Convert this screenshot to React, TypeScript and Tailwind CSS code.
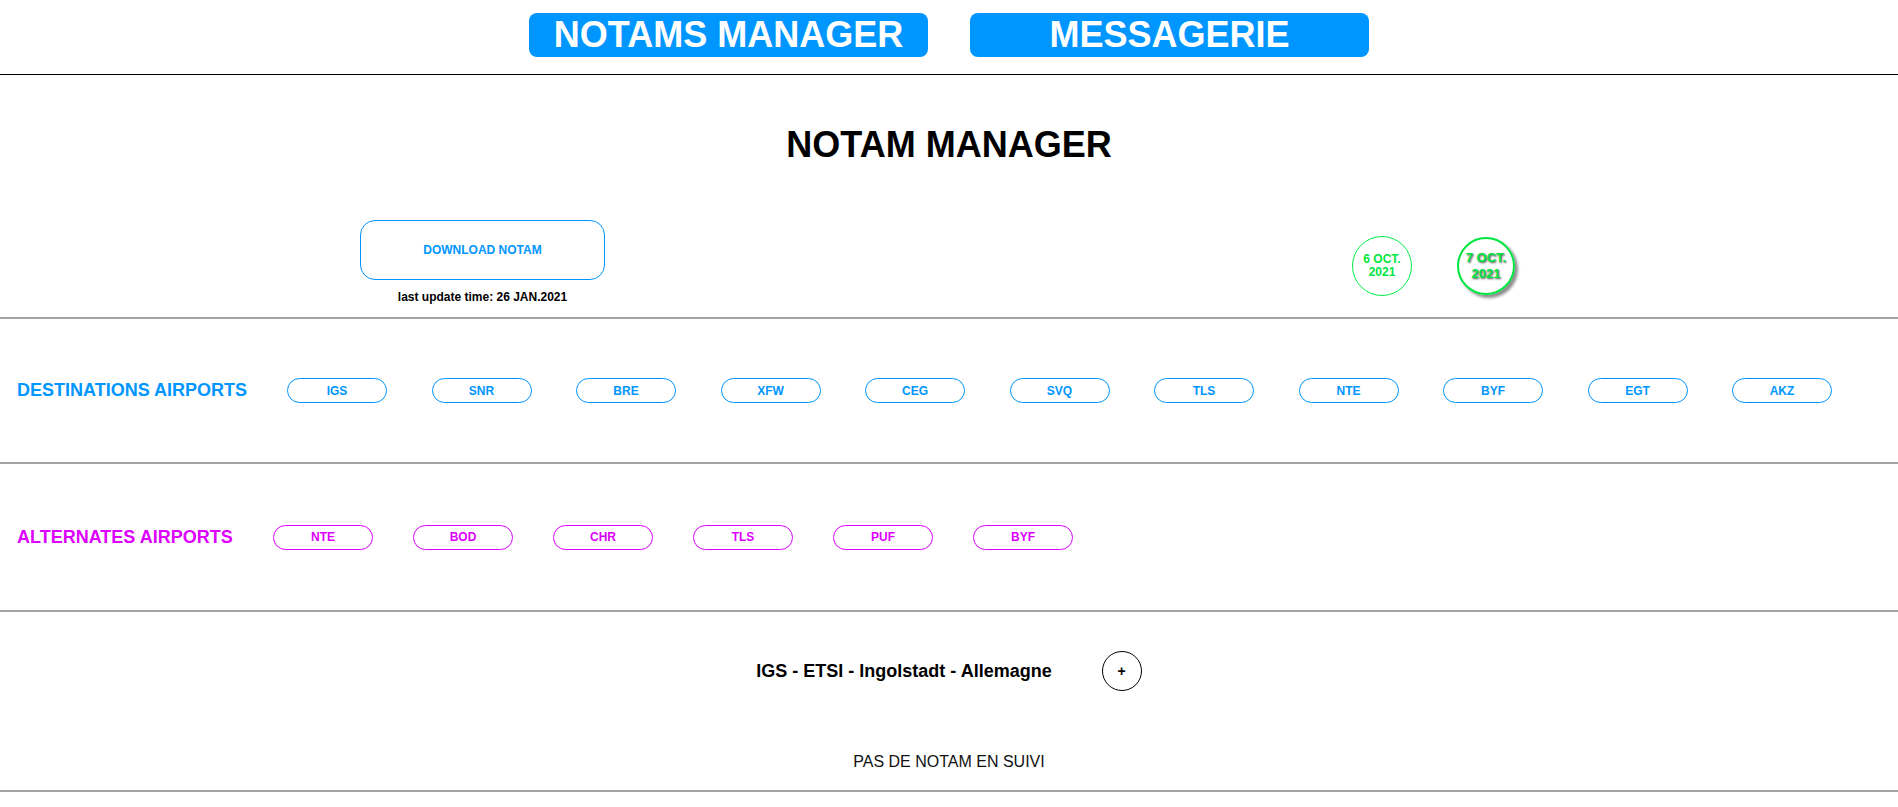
import React from 'react'

const destinations = ['IGS', 'SNR', 'BRE', 'XFW', 'CEG', 'SVQ', 'TLS', 'NTE', 'BYF', 'EGT', 'AKZ']
const alternates = ['NTE', 'BOD', 'CHR', 'TLS', 'PUF', 'BYF']

function Divider() {
  return <div className="h-[2px] w-full bg-[#a3a3a3]" />
}

export default function App() {
  return (
    <div className="min-h-screen w-full bg-white text-black font-['Liberation_Sans',Arial,sans-serif]">
      {/* top nav */}
      <header className="flex h-[75px] items-start justify-center gap-[42px] border-b border-black pt-[13px]">
        <button className="flex h-[44px] w-[399px] items-center justify-center rounded-[8px] bg-[#0096ff] text-[36px] font-bold leading-none text-white">
          NOTAMS MANAGER
        </button>
        <button className="flex h-[44px] w-[399px] items-center justify-center rounded-[8px] bg-[#0096ff] text-[36px] font-bold leading-none text-white">
          MESSAGERIE
        </button>
      </header>

      {/* title + download */}
      <section className="flex flex-col pb-[12px] pt-[52px]">
        <h1 className="text-center text-[36px] font-bold leading-[36px]">NOTAM MANAGER</h1>
        <div className="mt-[57px] flex items-start pl-[360px]">
          <div className="flex w-[245px] flex-col items-center">
            <button className="flex h-[60px] w-[245px] items-center justify-center rounded-[15px] border border-[#0096ff] text-[12px] font-bold text-[#0096ff]">
              DOWNLOAD NOTAM
            </button>
            <div className="mt-[9px] text-[12px] font-bold leading-[16px]">last update time: 26 JAN.2021</div>
          </div>
          <div className="ml-[747px] mt-[16px] flex h-[60px] w-[60px] flex-col items-center justify-center rounded-full border border-[#00ee44] text-center text-[12px] font-bold leading-[13px] text-[#00e640]">
            <span>6 OCT.</span>
            <span>2021</span>
          </div>
          <div className="ml-[45px] mt-[17px] flex h-[58px] w-[58px] flex-col items-center justify-center rounded-full border-2 border-[#00e640] text-center text-[13px] font-bold leading-[16px] text-[#00e640] shadow-[3px_3px_3px_rgba(0,0,0,0.45)] [text-shadow:1px_1px_2px_#444]">
            <span>7 OCT.</span>
            <span>2021</span>
          </div>
        </div>
      </section>
      <Divider />

      {/* destinations */}
      <section className="flex h-[143px] items-center pl-[17px]">
        <div className="w-[270px] text-[18px] font-bold text-[#0096ff]">DESTINATIONS AIRPORTS</div>
        <div className="flex gap-[44.5px]">
          {destinations.map((code) => (
            <span
              key={code}
              className="flex h-[25px] w-[100px] items-center justify-center rounded-full border border-[#0096ff] text-[12px] font-bold text-[#0096ff]"
            >
              {code}
            </span>
          ))}
        </div>
      </section>
      <Divider />

      {/* alternates */}
      <section className="flex h-[146px] items-center pl-[17px]">
        <div className="w-[256px] text-[18px] font-bold text-[#dd00ff]">ALTERNATES AIRPORTS</div>
        <div className="flex gap-[40px]">
          {alternates.map((code) => (
            <span
              key={code}
              className="flex h-[25px] w-[100px] items-center justify-center rounded-full border border-[#dd00ff] text-[12px] font-bold text-[#dd00ff]"
            >
              {code}
            </span>
          ))}
        </div>
      </section>
      <Divider />

      {/* airport detail */}
      <section className="flex flex-col items-center pb-[16px] pt-[39px]">
        <div className="flex items-center gap-[50px]">
          <span className="text-[18px] font-bold">IGS - ETSI - Ingolstadt - Allemagne</span>
          <button className="flex h-[40px] w-[40px] items-center justify-center rounded-full border border-black text-[14px] font-bold">
            +
          </button>
        </div>
        <div className="mt-[59px] text-[16px] leading-[24px] text-[#111]">PAS DE NOTAM EN SUIVI</div>
      </section>
      <Divider />
    </div>
  )
}
